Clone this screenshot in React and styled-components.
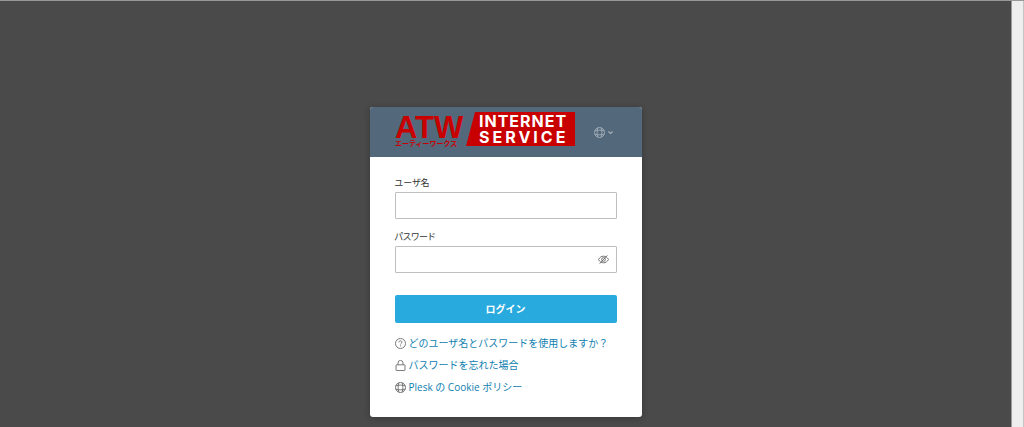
import React, { useState } from 'react';
import styled, { createGlobalStyle } from 'styled-components';

const GlobalStyle = createGlobalStyle`
    * {
        box-sizing: border-box;
    }

    body {
        margin: 0;
        background-color: #4a4a4a;
        color: #333;
        font-family: "Open Sans", "Noto Sans CJK JP", sans-serif;
        font-size: 10px;
    }
`;

const Page = styled.div`
    display: flex;
    min-height: 100vh;
    border-top: 1px solid #989898;
`;

const Main = styled.main`
    flex: 1;
    display: flex;
    justify-content: center;
    align-items: flex-start;
    padding: 106px 16px 10px;
    background-color: #4a4a4a;
`;

const ScrollTrack = styled.div`
    flex: 0 0 13px;
    background-color: #eee;
    border-left: 1px solid #999;
    border-right: 1px solid #c4c4c4;
`;

const Card = styled.section`
    width: 100%;
    max-width: 272px;
    border-radius: 3px;
    overflow: hidden;
    background-color: #fff;
    box-shadow: 0 1px 6px rgba(0, 0, 0, 0.25);
`;

const Header = styled.header`
    display: flex;
    align-items: center;
    gap: 19px;
    height: 50px;
    padding: 0 25px;
    background-color: #53687b;
`;

const Logo = styled.svg`
    flex: none;
    margin-bottom: 5px;
    font-weight: 700;
`;

const LanguageButton = styled.button`
    display: flex;
    align-items: center;
    gap: 3px;
    padding: 0;
    border: none;
    background: none;
    color: #a3aeb8;
    cursor: pointer;
`;

const Form = styled.form`
    display: flex;
    flex-direction: column;
    padding: 18px 25px 0;
`;

const Field = styled.div`
    display: flex;
    flex-direction: column;
    gap: 2px;
    margin-bottom: 10px;
`;

const Label = styled.label`
    font-size: 9px;
    line-height: 15px;
    font-feature-settings: "palt";
`;

const InputBox = styled.div`
    display: flex;
    align-items: center;
    height: 27px;
    border: 1px solid #bfbfbf;
    border-radius: 1px;
    background-color: #fff;

    &:focus-within {
        border-color: #28aade;
    }
`;

const Input = styled.input`
    flex: 1;
    min-width: 0;
    height: 100%;
    padding: 0 8px;
    border: none;
    outline: none;
    background: none;
    font: inherit;
`;

const EyeButton = styled.button`
    display: flex;
    padding: 0 7px;
    border: none;
    background: none;
    color: #666;
    cursor: pointer;
`;

const LoginButton = styled.button`
    height: 28px;
    padding: 0 0 2px;
    margin-top: 12px;
    border: none;
    border-radius: 2px;
    background-color: #28aade;
    color: #fff;
    font-family: inherit;
    font-size: 10px;
    font-weight: bold;
    cursor: pointer;

    &:hover {
        background-color: #1f9bcd;
    }
`;

const Links = styled.ul`
    margin: 0;
    padding: 9px 25px 19px;
    list-style: none;
`;

const LinkItem = styled.li`
    display: flex;
    align-items: center;
    gap: 3px;
    height: 22px;
    color: #6b6b6b;
    white-space: nowrap;
`;

const Link = styled.a`
    color: #0f80b0;
    line-height: 22px;
    text-decoration: none;

    &:hover {
        text-decoration: underline;
    }
`;

const Icon = ({ children, size = 11 }) => (
    <svg
        width={size}
        height={size}
        viewBox="0 0 16 16"
        fill="none"
        stroke="currentColor"
        strokeWidth="1.3"
        aria-hidden="true"
    >
        {children}
    </svg>
);

const GlobeIcon = () => (
    <Icon>
        <circle cx="8" cy="8" r="7.3" />
        <path d="M5.6 1.2C4.2 5 4.2 11 5.6 14.8M10.4 1.2c1.4 3.8 1.4 9.8 0 13.6M1.2 5.6c3.8-1.4 9.8-1.4 13.6 0M1.2 10.4c3.8 1.4 9.8 1.4 13.6 0" />
    </Icon>
);

const HelpIcon = () => (
    <Icon>
        <circle cx="8" cy="8" r="7.3" />
        <path d="M5.8 6.3c0-1.4 1-2.2 2.2-2.2s2.2.8 2.2 2c0 1.5-2.2 1.7-2.2 3.3M8 10.8v1.4" />
    </Icon>
);

const LockIcon = () => (
    <Icon>
        <rect x="1.5" y="7" width="13" height="8.3" rx="0.6" />
        <path d="M4.4 7V4.2a3.6 3.6 0 0 1 7.2 0V7" />
    </Icon>
);

const EyeOffIcon = () => (
    <Icon>
        <path d="M.7 8C2.5 4.8 5 3.2 8 3.2s5.5 1.6 7.3 4.8c-1.8 3.2-4.3 4.8-7.3 4.8S2.5 11.2.7 8z" />
        <circle cx="8" cy="8" r="2.7" />
        <path d="M2.5 14 13.5 2" />
    </Icon>
);

const CompanyLogo = () => (
    <Logo width="180" height="35" viewBox="0 0 180 35" role="img" aria-label="ATW INTERNET SERVICE">
        <g fill="#c80000">
            <text x="0" y="26" fontFamily="'Liberation Sans', Arial, sans-serif" fontSize="31">ATW</text>
            <text x="0" y="34" fontFamily="'Noto Sans CJK JP', sans-serif" fontSize="7">エーティーワークス</text>
        </g>
        <path d="M80 0h100v34H71z" fill="#c80000" />
        <g fill="#fff" fontFamily="Inter, sans-serif" fontSize="16">
            <text x="84" y="15" letterSpacing="1">INTERNET</text>
            <text x="84" y="31" letterSpacing="3">SERVICE</text>
        </g>
    </Logo>
);

function App() {
    const [formData, setFormData] = useState({
        username: '',
        password: '',
    });
    const [showPassword, setShowPassword] = useState(false);

    const handleChange = (e) => {
        setFormData({
            ...formData,
            [e.target.name]: e.target.value,
        });
    };

    const handleSubmit = (e) => {
        e.preventDefault();
    };

    return (
        <Page>
            <GlobalStyle />
            <Main>
                <Card>
                    <Header>
                        <CompanyLogo />
                        <LanguageButton type="button" aria-label="言語">
                            <GlobeIcon />
                            <Icon size={5}>
                                <path d="M1 5l7 6 7-6" strokeWidth="4" />
                            </Icon>
                        </LanguageButton>
                    </Header>
                    <Form onSubmit={handleSubmit}>
                        <Field>
                            <Label htmlFor="username">ユーザ名</Label>
                            <InputBox>
                                <Input
                                    type="text"
                                    name="username"
                                    id="username"
                                    value={formData.username}
                                    onChange={handleChange}
                                />
                            </InputBox>
                        </Field>
                        <Field>
                            <Label htmlFor="password">パスワード</Label>
                            <InputBox>
                                <Input
                                    type={showPassword ? 'text' : 'password'}
                                    name="password"
                                    id="password"
                                    value={formData.password}
                                    onChange={handleChange}
                                />
                                <EyeButton
                                    type="button"
                                    aria-label="パスワードを表示"
                                    onClick={() => setShowPassword(!showPassword)}
                                >
                                    <EyeOffIcon />
                                </EyeButton>
                            </InputBox>
                        </Field>
                        <LoginButton type="submit">ログイン</LoginButton>
                    </Form>
                    <Links>
                        <LinkItem>
                            <HelpIcon />
                            <Link href="#help">どのユーザ名とパスワードを使用しますか？</Link>
                        </LinkItem>
                        <LinkItem>
                            <LockIcon />
                            <Link href="#reset">パスワードを忘れた場合</Link>
                        </LinkItem>
                        <LinkItem>
                            <GlobeIcon />
                            <Link href="#cookies">Plesk の Cookie ポリシー</Link>
                        </LinkItem>
                    </Links>
                </Card>
            </Main>
            <ScrollTrack />
        </Page>
    );
}

export default App;
